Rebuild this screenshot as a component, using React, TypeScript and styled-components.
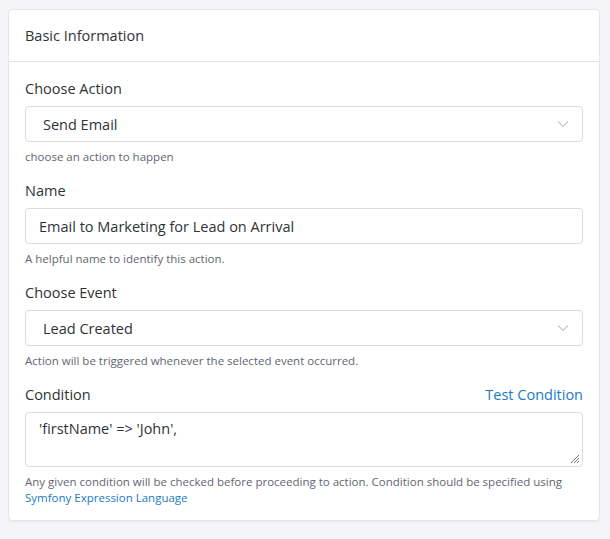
import React from "react";
import styled, { createGlobalStyle } from "styled-components";

const Global = createGlobalStyle`
  body { margin: 0; background: #f4f5f8; font-family: "Open Sans", "Noto Sans", sans-serif; }
`;
const Page = styled.div`padding: 9px 10px 9px 8px;`;
const Card = styled.div`
  background: #fff; border: 1px solid #e3e5ea; border-radius: 4px;
  box-shadow: 0 1px 2px rgba(0,0,0,0.04);
`;
const Header = styled.div`
  height: 51px; display: flex; align-items: center; padding: 0 16px;
  border-bottom: 1px solid #e3e5ea; font-size: 14.5px; color: #2f3337;
`;
const Body = styled.div`padding: 15px 16px 14px;`;
const Group = styled.div`margin-bottom: 14px; &:last-child{margin-bottom:0;}`;
const LabelRow = styled.div`
  display: flex; justify-content: space-between; align-items: center;
  font-size: 14.5px; color: #2f3337; height: 22px; margin-bottom: 7px;
`;
const Link = styled.a`color: #1a7bc5; text-decoration: none;`;
const Field = styled.div<{ $pad: number }>`
  height: 34px; border: 1px solid #d9dce1; border-radius: 4px;
  display: flex; align-items: center; justify-content: space-between;
  padding: 0 13px 0 ${p => p.$pad}px; font-size: 14.5px; color: #2f3337;
`;
const Area = styled.div`
  position: relative; border: 1px solid #d9dce1; border-radius: 4px;
  padding: 6px 13px; box-sizing: border-box; height: 55px; font-size: 14.5px; color: #2f3337;
`;
const Grip = styled.svg`position: absolute; right: 2px; bottom: 2px;`;
const Help = styled.div`font-size: 11.5px; color: #5f6670; margin-top: 7px; line-height: 16px;`;

const Chevron = () => (
  <svg width="12" height="8" viewBox="0 0 12 8"><path d="M1 1.5l5 5 5-5" fill="none" stroke="#c3c7cd" strokeWidth="1.2" /></svg>
);

export default function App() {
  return (
    <Page>
      <Global />
      <Card>
        <Header>Basic Information</Header>
        <Body>
          <Group>
            <LabelRow>Choose Action</LabelRow>
            <Field $pad={17}>Send Email<Chevron /></Field>
            <Help>choose an action to happen</Help>
          </Group>
          <Group>
            <LabelRow>Name</LabelRow>
            <Field $pad={13}>Email to Marketing for Lead on Arrival</Field>
            <Help>A helpful name to identify this action.</Help>
          </Group>
          <Group>
            <LabelRow>Choose Event</LabelRow>
            <Field $pad={17}>Lead Created<Chevron /></Field>
            <Help>Action will be triggered whenever the selected event occurred.</Help>
          </Group>
          <Group>
            <LabelRow>Condition<Link>Test Condition</Link></LabelRow>
            <Area>
              'firstName' =&gt; 'John',
              <Grip width="11" height="11" viewBox="0 0 11 11">
                <path d="M10 2L2 10M10 5L5 10M10 8L8 10" stroke="#777" strokeWidth="1" />
              </Grip>
            </Area>
            <Help>Any given condition will be checked before proceeding to action. Condition should be specified using <Link>Symfony Expression Language</Link></Help>
          </Group>
        </Body>
      </Card>
    </Page>
  );
}
